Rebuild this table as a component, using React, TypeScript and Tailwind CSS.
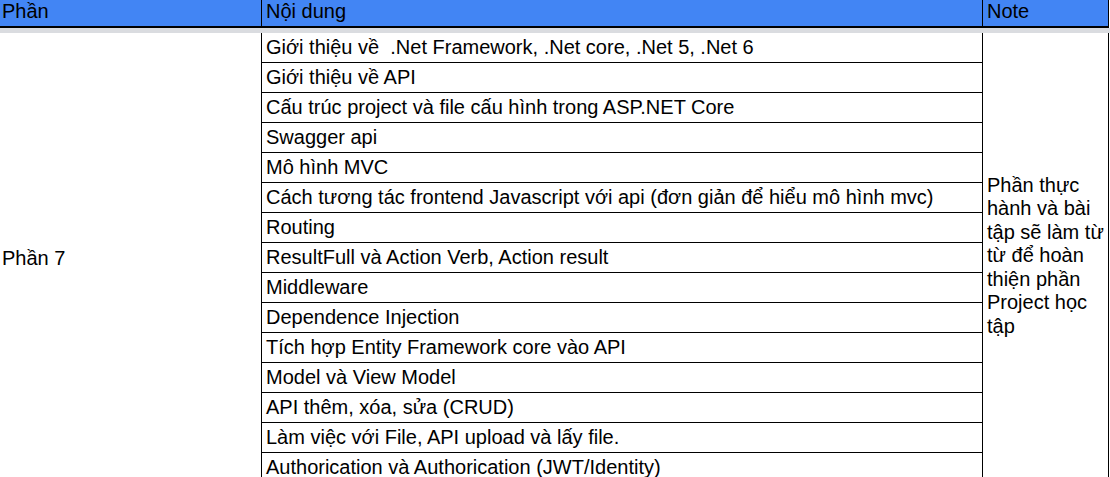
const topics = [
  'Giới thiệu về  .Net Framework, .Net core, .Net 5, .Net 6',
  'Giới thiệu về API',
  'Cấu trúc project và file cấu hình trong ASP.NET Core',
  'Swagger api',
  'Mô hình MVC',
  'Cách tương tác frontend Javascript với api (đơn giản để hiểu mô hình mvc)',
  'Routing',
  'ResultFull và Action Verb, Action result',
  'Middleware',
  'Dependence Injection',
  'Tích hợp Entity Framework core vào API',
  'Model và View Model',
  'API thêm, xóa, sửa (CRUD)',
  'Làm việc với File, API upload và lấy file.',
  'Authorication và Authorication (JWT/Identity)',
];

const noteLines = ['Phần thực', 'hành và bài', 'tập sẽ làm từ', 'từ để hoàn', 'thiện phần', 'Project học', 'tập'];

export default function App() {
  return (
    <div className="h-[477px] w-[1110px] overflow-hidden bg-white text-[20px] text-black font-['Liberation_Sans',Arial,sans-serif]">
      {/* Header */}
      <div className="flex h-[28px] border-b-2 border-black bg-[#4285f4] w-[1109px]">
        <div className="w-[261px] h-[26px] pl-[2px] leading-[22px]">Phần</div>
        <div className="w-[721px] h-[26px] border-l border-black pl-[4px] leading-[22px]">Nội dung</div>
        <div className="w-[127px] h-[26px] border-x border-black pl-[4px] leading-[22px]">Note</div>
      </div>
      {/* frozen row divider */}
      <div className="h-[5px] bg-[#dadce0]" />

      {/* Body */}
      <div className="flex w-[1109px]">
        <div className="w-[261px] flex items-center pl-[2px]">Phần 7</div>
        <div className="w-[721px] border-l border-black">
          {topics.map((t, i) => (
            <div key={i} className="h-[30px] border-b border-black pl-[4px] leading-[28px] whitespace-pre">
              {t}
            </div>
          ))}
        </div>
        <div className="w-[127px] border-x border-black flex items-center pl-[4px]">
          <div className="mb-[4px] leading-[23.5px] whitespace-nowrap">
            {noteLines.map((l, i) => (
              <div key={i}>{l}</div>
            ))}
          </div>
        </div>
      </div>
    </div>
  );
}
